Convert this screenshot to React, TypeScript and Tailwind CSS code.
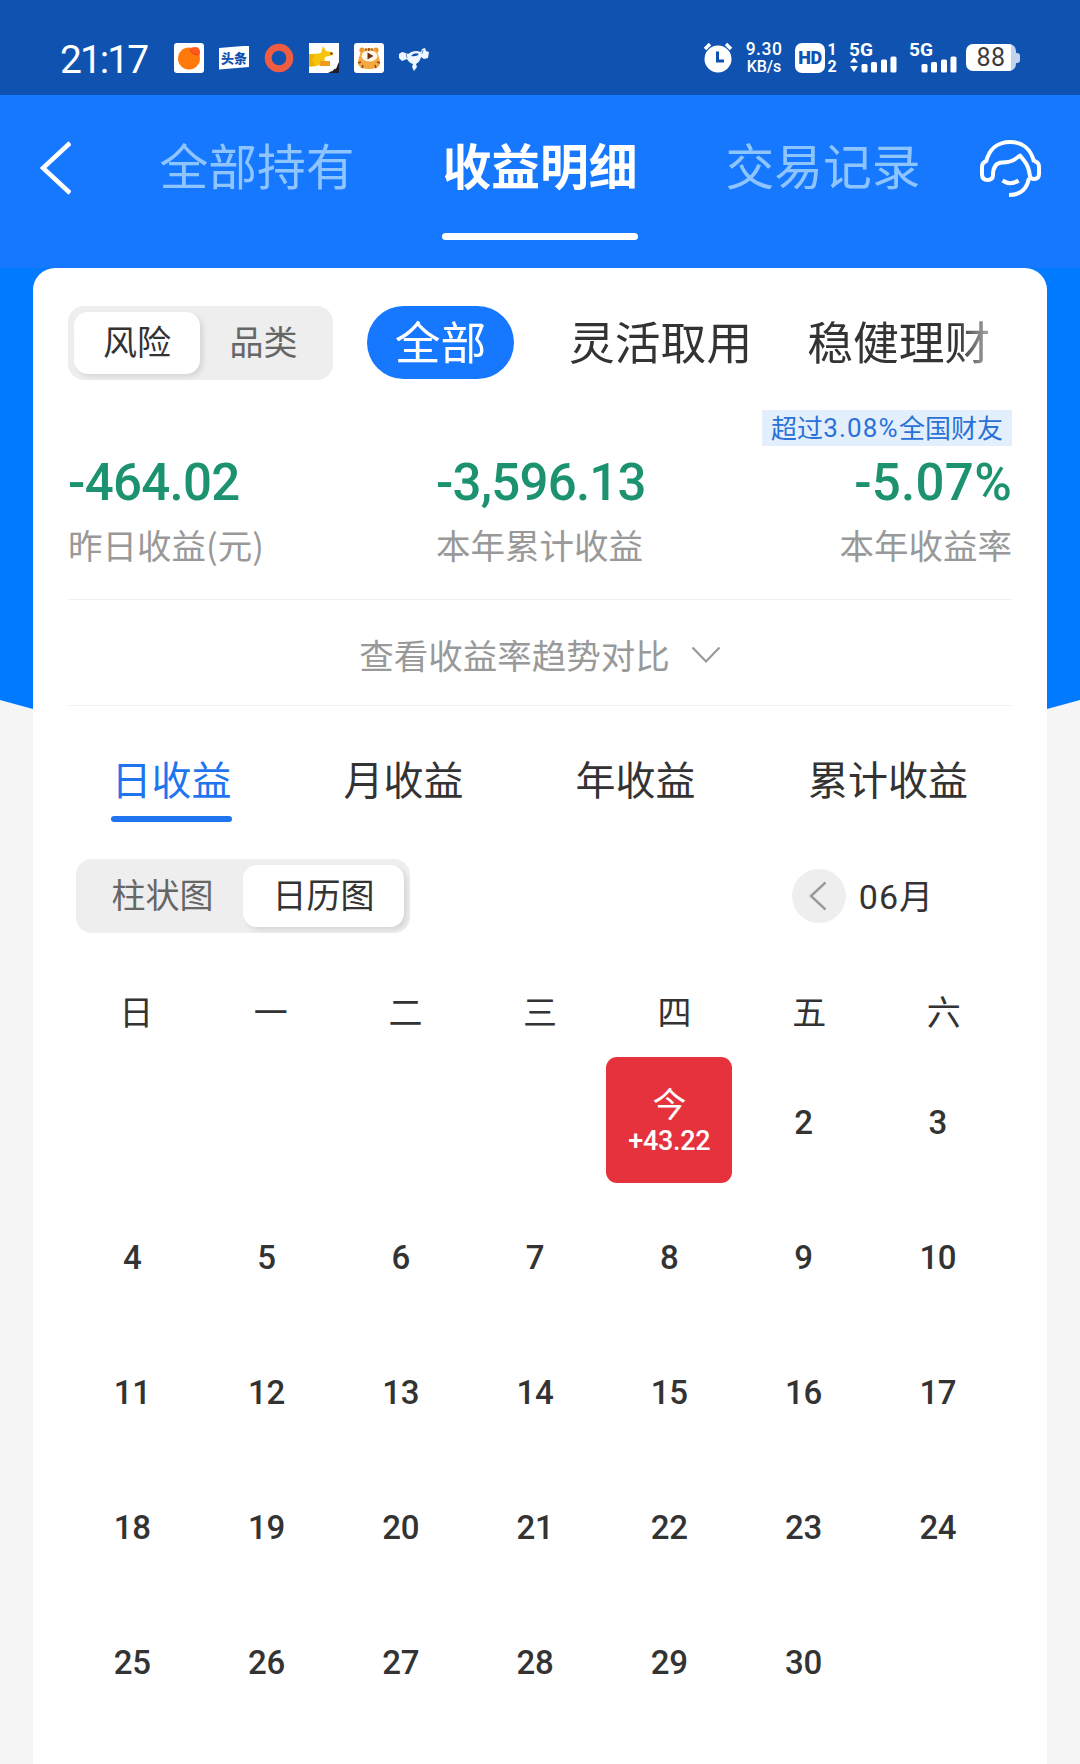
import React, { useState } from "react";

const weekDays = ["日", "一", "二", "三", "四", "五", "六"];
const filters = ["全部", "灵活取用", "稳健理财"];

const summary = [
    { value: "-464.02", label: "昨日收益(元)", align: "items-start", tracking: "tracking-[-0.7px]" },
    { value: "-3,596.13", label: "本年累计收益", align: "items-start", tracking: "tracking-[-0.8px]" },
    { value: "-5.07%", label: "本年收益率", align: "items-end", tracking: "tracking-[0.3px]" },
];

const periods = [
    { name: "日收益", width: "w-[121px]" },
    { name: "月收益", width: "w-[121px]" },
    { name: "年收益", width: "w-[121px]" },
    { name: "累计收益", width: "w-[162px]" },
];

// June starts on a Thursday
const firstWeekDay = 4;
const daysInMonth = 30;
const today = 1;

function AppIcons() {
    return (
        <div className="flex items-center gap-[15px]">
            <svg className="w-[30px] h-[30px]" viewBox="0 0 30 30">
                <rect width="30" height="30" rx="3" fill="#fff" />
                <circle cx="15" cy="15.5" r="11" fill="#ff7a0a" />
                <path d="M15.500 6q4-3 8.500-1.500q3.500 4 1 8.500q-7 0-9.500-7z" fill="#ff5a1c" />
                <path d="M16 6.500q2 5.500 8 5" fill="none" stroke="#e8430f" strokeWidth="1" />
            </svg>
            <div className="w-[30px] h-[24px] bg-white [clip-path:polygon(0_10%,100%_0,100%_90%,0_100%)] flex items-center justify-center text-[13px] leading-none font-black text-[#1052b0]">
                头条
            </div>
            <svg className="w-[30px] h-[30px]" viewBox="0 0 30 30">
                <circle cx="15" cy="15" r="10.800" fill="none" stroke="#ee5d42" strokeWidth="7" />
            </svg>
            <svg className="w-[30px] h-[30px]" viewBox="0 0 30 30">
                <rect width="30" height="30" fill="#fff" />
                <path d="M1 11q7 0 11-1l2-7l3 5l6 1l1 3l-8 2l-1 7l-8 2l-7 1z" fill="#f6c40c" />
                <path d="M0 11l6 1l-3 5l4 6H0z" fill="#f0b000" />
                <path d="M11 18h10v5H11z" fill="#ee9a1a" />
                <circle cx="22.500" cy="10.500" r="1.200" fill="#7a3a1a" />
                <path d="M30 19v11H19q8-3 11-11z" fill="#1d1d2b" />
                <path d="M23 28l2-3m1 1l2-3" stroke="#eee" strokeWidth="1.200" />
            </svg>
            <svg className="w-[30px] h-[30px]" viewBox="0 0 30 30">
                <rect width="30" height="30" rx="3" fill="#fff" />
                <circle cx="8" cy="7" r="2.600" fill="#e89428" />
                <circle cx="22" cy="7" r="2.600" fill="#e89428" />
                <path d="M15 5q8 0 9.500 8q4 9-2 12q-7 2-15 0q-6-3-2-12q1.500-8 9.500-8z" fill="#f3a840" />
                <ellipse cx="15.500" cy="13" rx="8" ry="5.500" fill="#fff6e6" />
                <path d="M13.500 9.500l6 3.500l-6 3.500z" fill="#6a3018" />
                <path d="M15 5v3M12 5.500v2M18 5.500v2M4 20l3-1M26 20l-3-1M8 25l1-3M22 25l-1-3" stroke="#8a4a1c" strokeWidth="1.500" />
            </svg>
            <svg className="w-[30px] h-[30px]" viewBox="0 0 30 30" fill="#eef6ff">
                <path d="M0 11l3-2l4 1l2 1q6-5 13-2l1-3l3-1l1 3l3 1l-1 6l-4 1l-3-2q-1 5-5 7l1 3l-3 4l-2-4l1-3q-4-1-6-5l-5 2l-3-3z" />
                <path d="M12 13q3-4 8-2q-2 3-8 2z" fill="#1052b0" />
                <path d="M7 10l1 5M24 7l-1 4" stroke="#6b94d4" strokeWidth="1" />
            </svg>
        </div>
    );
}

function SignalBars({ arrows }: { arrows?: boolean }) {
    return (
        <svg className="w-[49px] h-[31px] overflow-visible font-[Roboto]" viewBox="0 0 49 31" fill="#fff">
            <text x="0" y="13.500" fontSize="18" fontWeight="700" textLength="24" lengthAdjust="spacingAndGlyphs">5G</text>
            {arrows && <path d="M1 20.500l4-5l4 5zM1 24h8l-4 6z" />}
            <rect x="12.500" y="22" width="6" height="8.500" rx="1.500" />
            <rect x="22" y="20" width="6" height="10.500" rx="1.500" />
            <rect x="32" y="17.500" width="6" height="13" rx="1.500" />
            <rect x="41.500" y="14.500" width="6" height="16" rx="1.500" />
        </svg>
    );
}

function StatusBar() {
    return (
        <div className="h-[95px] bg-[#1052b0] flex items-center justify-between pl-[60px] pr-[60px] pt-[20px] text-white">
            <div className="flex items-center gap-[26px]">
                <span className="w-[88px] pt-[5px] font-[Roboto] text-[39px] leading-none tracking-[-2px]">21:17</span>
                <AppIcons />
            </div>
            <div className="flex items-center font-[Roboto]">
                <svg className="w-[30px] h-[31px] mr-[12px]" viewBox="0 0 30 31">
                    <circle cx="15" cy="17" r="13.500" fill="#fff" />
                    <path d="M2 7l5-5M28 7l-5-5" stroke="#fff" strokeWidth="3.500" />
                    <path d="M14.500 9.500v9.500h6.500" fill="none" stroke="#1052b0" strokeWidth="3" />
                </svg>
                <div className="w-[38px] mr-[12px] text-center text-[17.5px] leading-[17px] font-medium">
                    <p className="tracking-[0.5px]">9.30</p>
                    <p className="text-[16px]">KB/s</p>
                </div>
                <div className="w-[30px] h-[30px] rounded-[7px] bg-white flex items-center justify-center text-[18px] leading-none font-black text-[#1052b0] tracking-[-0.5px]">
                    HD
                </div>
                <div className="w-[12px] mr-[11px] ml-[1px] text-center font-bold text-[16px] leading-[17px]">
                    <p>1</p>
                    <p>2</p>
                </div>
                <SignalBars arrows />
                <div className="w-[11px]" />
                <SignalBars />
                <div className="ml-[8px] w-[50px] h-[27px] rounded-[7px] bg-[linear-gradient(90deg,#fff_90%,#c3d3ee_90%)] flex items-center justify-center text-[25px] leading-none tracking-[0.5px] text-[#3c3c3c]">
                    88
                </div>
                <div className="w-[4px] h-[10px] rounded-r-[3px] bg-[#c3d3ee]" />
            </div>
        </div>
    );
}

function NavBar() {
    return (
        <div className="h-[173px] bg-[#1677ff] flex items-start pl-[39px] text-[48.8px] leading-none text-[#8ec5ff]">
            <svg className="w-[32px] h-[54px] mt-[46px]" viewBox="0 0 32 54" fill="none" stroke="#fff" strokeWidth="4.500">
                <path d="M31 2L4 27l27 25" />
            </svg>
            <div className="w-[196px] ml-[88px] mt-[45px] text-center">全部持有</div>
            <div className="w-[196px] ml-[87px] mt-[45px] text-center font-bold text-white">
                收益明细
                <div className="h-[7px] mt-[44px] rounded-full bg-white" />
            </div>
            <div className="w-[196px] ml-[87px] mt-[45px] text-center">交易记录</div>
            <svg className="w-[62px] h-[60px] ml-[58px] mt-[43px]" viewBox="0 0 62 60" fill="none" stroke="#fff" strokeWidth="4" strokeLinejoin="round">
                <path d="M7 24C10 11 19 4 31 4s21 7 24 20" />
                <path d="M8 23Q3 24 3 29v7q0 6 5.500 6t5.500-5q0-12 9-12.500q9 0 14-4l4-3l4 5q5 6 6 16q1 2.500 4 2.500q5 0 5-5v-7q0-5-5-6" />
                <path d="M50 40q-3 17-20 17" />
                <path d="M23.500 42.500q8 5.500 16 0" />
            </svg>
        </div>
    );
}

function Segmented({ options, active, className, itemClass }) {
    return (
        <div className={`flex items-center rounded-[16px] bg-[#eeeeee] p-[6px] h-[74px] ${className}`}>
            {options.map((name, i) => (
                <div
                    key={name}
                    className={`h-[62px] pb-[4px] flex items-center justify-center rounded-[14px] text-[34px] leading-none ${itemClass[i]} ${
                        i === active ? "bg-white text-[#333] shadow-[3px_3px_5px_rgba(0,0,0,0.1)]" : "text-[#666]"
                    }`}
                >
                    {name}
                </div>
            ))}
        </div>
    );
}

function Calendar() {
    const cells = [
        ...Array(firstWeekDay).fill(null),
        ...Array.from({ length: daysInMonth }, (_, i) => i + 1),
    ];

    return (
        <div>
            <div className="grid grid-cols-7 mt-[61px] w-[942px] ml-[36px] text-center text-[34px] leading-[34px] text-[#333]">
                {weekDays.map((d) => (
                    <span key={d}>{d}</span>
                ))}
            </div>
            <div className="grid grid-cols-7 w-[940px] ml-[32px] mt-[24px] font-[Roboto] text-[33px] font-medium tracking-[-0.3px] text-[#333]">
                {cells.map((day, i) => (
                    <div key={i} className="h-[135.2px] flex items-center justify-center">
                        {day === today ? (
                            <div className="w-[126px] h-[126px] rounded-[11px] bg-[#e6323c] text-white flex flex-col items-center justify-center">
                                <span className="font-['Noto_Sans_CJK_SC'] font-normal text-[34px] leading-[38px]">今</span>
                                <span className="mt-[2px] -mb-[2px] text-[27px] leading-[34px]">+43.22</span>
                            </div>
                        ) : (
                            <span className="leading-none pt-[5px]">{day}</span>
                        )}
                    </div>
                ))}
            </div>
        </div>
    );
}

function App() {
    const [period, setPeriod] = useState("日收益");

    return (
        <div className="w-[1080px] h-[1764px] overflow-hidden bg-[#f5f5f5] font-['Noto_Sans_CJK_SC',sans-serif]">
            <StatusBar />
            <NavBar />
            <div className="relative h-[1496px] px-[33px]">
                {/* blue backdrop with the curved bottom, hidden behind the card in the middle */}
                <svg className="absolute left-0 top-0 w-[1080px] h-[460px]" viewBox="0 0 1080 460">
                    <path d="M0 0H1080V432L1047 441H33L0 432z" fill="#007aff" />
                </svg>
                <div className="relative h-full bg-white rounded-t-[22px] pt-[38px]">
                    <div className="flex items-start pl-[35px]">
                        <Segmented
                            options={["风险", "品类"]}
                            active={0}
                            className="w-[265px]"
                            itemClass={["w-[126px]", "w-[127px]"]}
                        />
                        <div className="ml-[34px] w-[640px] flex items-center text-[45.8px] leading-none text-[#333] whitespace-nowrap [mask-image:linear-gradient(90deg,#000_590px,transparent_645px)]">
                            {filters.map((f, i) => (
                                <div
                                    key={f}
                                    className={
                                        i === 0
                                            ? "w-[147px] h-[73px] pb-[4px] rounded-full bg-[#1677ff] text-white flex items-center justify-center"
                                            : "ml-[55px] pb-[4px]"
                                    }
                                >
                                    {f}
                                </div>
                            ))}
                        </div>
                    </div>

                    <div className="mx-[35px] mt-[30px] flex justify-end">
                        <span className="w-[250px] h-[36px] pb-[2px] bg-[#e3effd] text-[#2a72d8] flex items-center justify-center text-[26px] leading-none">
                            超过<span className="pt-[2px] font-[Roboto] tracking-[1.2px]">3.08%</span>全国财友
                        </span>
                    </div>

                    <div className="mx-[35px] mt-[11px] grid grid-cols-[368px_1fr_auto]">
                        {summary.map((s) => (
                            <div key={s.label} className={`flex flex-col ${s.align}`}>
                                <span className={`font-[Roboto] font-medium text-[51px] leading-[52px] text-[#1c9270] ${s.tracking}`}>{s.value}</span>
                                <span className="mt-[17px] text-[34.5px] leading-[36px] text-[#999]">{s.label}</span>
                            </div>
                        ))}
                    </div>

                    <div className="mx-[35px] mt-[37px] h-[107px] pt-[4px] border-y border-[#f0f0f0] flex items-center justify-center text-[34.5px] leading-none text-[#999]">
                        查看收益率趋势对比
                        <svg className="ml-[21px] w-[30px] h-[18px]" viewBox="0 0 30 18" fill="none" stroke="#999" strokeWidth="2.200">
                            <path d="M1.500 1.500L15 15.500L28.500 1.500" />
                        </svg>
                    </div>

                    <div className="flex justify-between pl-[78px] pr-[78px] mt-[51px] text-[40px] leading-[42px] text-[#333]">
                        {periods.map((p) => (
                            <div key={p.name} className={`${p.width} text-center cursor-pointer`} onClick={() => setPeriod(p.name)}>
                                <p className={p.name === period ? "text-[#1f74f0]" : ""}>{p.name}</p>
                                <div className={`h-[6px] mt-[17px] rounded-full ${p.name === period ? "bg-[#1f74f0]" : ""}`} />
                            </div>
                        ))}
                    </div>

                    <div className="flex items-center justify-between pl-[43px] pr-[114px] mt-[37px]">
                        <Segmented
                            options={["柱状图", "日历图"]}
                            active={1}
                            className="w-[334px]"
                            itemClass={["w-[161px]", "w-[161px]"]}
                        />
                        <div className="flex items-center text-[34px] leading-none text-[#333]">
                            <div className="w-[54px] h-[54px] rounded-full bg-[#eeeeee] flex items-center justify-center mr-[13px]">
                                <svg className="w-[18px] h-[30px] -ml-[2px]" viewBox="0 0 18 30" fill="none" stroke="#999" strokeWidth="2.400">
                                    <path d="M16.500 1.500L2 15L16.500 28.500" />
                                </svg>
                            </div>
                            <span className="pt-[2px] font-[Roboto] text-[34px] tracking-[1px]">06</span>
                            <span className="pb-[2px]">月</span>
                        </div>
                    </div>

                    <Calendar />
                </div>
            </div>
        </div>
    );
}

export default App;
